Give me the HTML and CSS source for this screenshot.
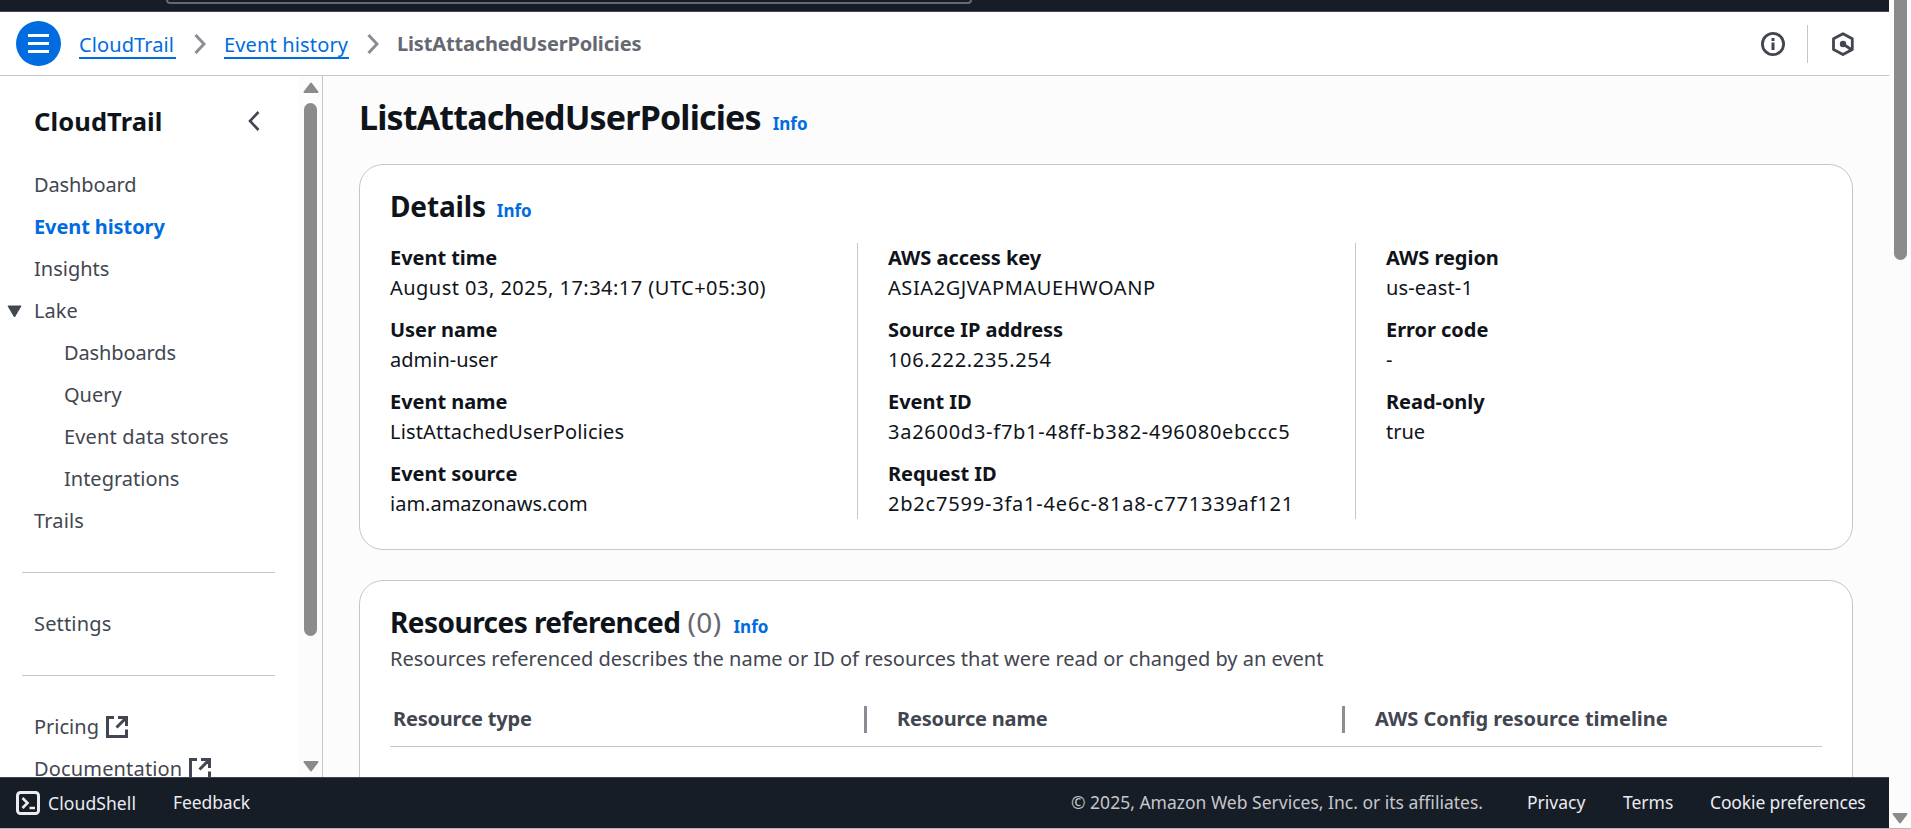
FILE: index.html
```html
<!DOCTYPE html>
<html lang="en">
<head>
<meta charset="utf-8">
<title>CloudTrail - ListAttachedUserPolicies</title>
<link rel="stylesheet" href="styles.css">
</head>
<body>
<svg width="0" height="0" class="defs">
  <symbol id="external" viewBox="0 0 22 22"><path d="M8 1.500H1.500v19H20.500V13.500M12 1.500h8.500v8.500M20 2 10.500 11.500" fill="none" stroke="currentColor" stroke-width="3"/></symbol>
  <symbol id="next" viewBox="0 0 12 20"><path d="M1.500 1 10 10 1.500 19" fill="none" stroke="currentColor" stroke-width="3"/></symbol>
</svg>
<div class="app">
  <div class="page">
    <div class="topbar"><div class="search"></div></div>
    <header class="header">
      <button class="menu" aria-label="Menu"><span></span><span></span><span></span></button>
      <nav class="crumbs">
        <a class="crumb-service">CloudTrail</a>
        <svg class="sep"><use href="#next"/></svg>
        <a class="crumb-history">Event history</a>
        <svg class="sep"><use href="#next"/></svg>
        <b>ListAttachedUserPolicies</b>
      </nav>
      <div class="tools">
        <svg width="24" height="24" viewBox="0 0 24 24" fill="none"><circle cx="12" cy="12" r="10.600" stroke="#424650" stroke-width="2.800"/><path d="M12 6v3M12 10.500v7.500" stroke="#424650" stroke-width="3"/></svg>
        <span class="rule"></span>
        <svg width="24" height="24" viewBox="0 0 24 24" fill="none"><path d="M12 1.700 21.300 6.800V17.500L12 22.500 2.500 17.500V6.800Z" stroke="#424650" stroke-width="2.800" stroke-linejoin="round"/><circle cx="12" cy="12" r="3.200" fill="#424650"/><path d="M12 12 21 18" stroke="#424650" stroke-width="2.800"/></svg>
      </div>
    </header>
    <div class="body">
      <aside class="side">
        <div class="side-content">
          <div class="side-head"><h2>CloudTrail</h2><svg width="12" height="20" viewBox="0 0 12 20"><path d="M10.500 1 2 10l8.500 9" fill="none" stroke="#424650" stroke-width="2.600"/></svg></div>
          <a class="tight">Dashboard</a>
          <a class="active">Event history</a>
          <a>Insights</a>
          <a class="group"><svg width="15" height="13" viewBox="0 0 15 13"><path d="M1 1h13L7.500 12Z" fill="#424650" stroke="#424650" stroke-linejoin="round"/></svg>Lake</a>
          <a class="sub tight">Dashboards</a>
          <a class="sub">Query</a>
          <a class="sub wide">Event data stores</a>
          <a class="sub">Integrations</a>
          <a class="wide">Trails</a>
          <hr>
          <a class="wide">Settings</a>
          <hr>
          <a>Pricing <svg class="ext"><use href="#external"/></svg></a>
          <a class="wide">Documentation <svg class="ext"><use href="#external"/></svg></a>
        </div>
        <div class="track side-track">
          <svg width="16" height="11" viewBox="0 0 16 11"><path d="M8 1.500 14.500 10h-13Z" fill="#8b8b8b" stroke="#8b8b8b" stroke-width="2" stroke-linejoin="round"/></svg>
          <div class="thumb"></div>
          <svg class="down" width="16" height="11" viewBox="0 0 16 11"><path d="M1.500 1h13L8 9.500Z" fill="#8b8b8b" stroke="#8b8b8b" stroke-width="2" stroke-linejoin="round"/></svg>
        </div>
      </aside>
      <main class="main">
        <div class="title"><h1>ListAttachedUserPolicies</h1><a class="info">Info</a></div>
        <section class="card details">
          <div class="title"><h2>Details</h2><a class="info">Info</a></div>
          <div class="columns">
            <dl>
              <dt>Event time</dt><dd class="date">August 03, 2025, 17:34:17 (UTC+05:30)</dd>
              <dt>User name</dt><dd>admin-user</dd>
              <dt>Event name</dt><dd class="wide">ListAttachedUserPolicies</dd>
              <dt>Event source</dt><dd>iam.amazonaws.com</dd>
            </dl>
            <dl>
              <dt>AWS access key</dt><dd class="key">ASIA2GJVAPMAUEHWOANP</dd>
              <dt>Source IP address</dt><dd class="ip">106.222.235.254</dd>
              <dt>Event ID</dt><dd class="uuid">3a2600d3-f7b1-48ff-b382-496080ebccc5</dd>
              <dt>Request ID</dt><dd class="uuid request">2b2c7599-3fa1-4e6c-81a8-c771339af121</dd>
            </dl>
            <dl>
              <dt>AWS region</dt><dd class="wide">us-east-1</dd>
              <dt>Error code</dt><dd>-</dd>
              <dt>Read-only</dt><dd>true</dd>
            </dl>
          </div>
        </section>
        <section class="card resources">
          <div class="title"><h2>Resources referenced</h2><span class="count">(0)</span><a class="info">Info</a></div>
          <p>Resources referenced describes the name or ID of resources that were read or changed by an event</p>
          <div class="thead"><div>Resource type</div><div>Resource name</div><div class="timeline">AWS Config resource timeline</div></div>
        </section>
      </main>
    </div>
    <footer class="footer">
      <svg width="24" height="24" viewBox="0 0 24 24" fill="none" stroke="#ebebf0"><rect x="1.500" y="1.500" width="21" height="21" rx="3" stroke-width="3"/><path d="M6.500 7 11.500 12 6.500 17M13.500 17H19" stroke-width="2.600"/></svg>
      <a class="shell">CloudShell</a>
      <a class="feedback">Feedback</a>
      <span class="copy">© 2025, Amazon Web Services, Inc. or its affiliates.</span>
      <a class="privacy">Privacy</a>
      <a class="terms">Terms</a>
      <a class="cookies">Cookie preferences</a>
    </footer>
  </div>
  <div class="track page-track">
    <div class="thumb"></div>
    <svg class="down" width="16" height="11" viewBox="0 0 16 11"><path d="M1.500 1h13L8 9.500Z" fill="#8b8b8b" stroke="#8b8b8b" stroke-width="2" stroke-linejoin="round"/></svg>
  </div>
</div>
</body>
</html>
```

FILE: styles.css
```css
* { box-sizing: border-box; margin: 0; padding: 0; }
body { font-family: "Noto Sans", "Open Sans", sans-serif; font-size: 20px; line-height: 30px; color: #0f141a; background: #fcfcfd; overflow: hidden; }
a, h1, h2, p, b, dt, dd, span { white-space: nowrap; }
.defs { position: absolute; }
.app { display: flex; height: 829px; border-bottom: 1px solid #b8b8b8; }
.page { width: 1889px; display: flex; flex-direction: column; }
.wide { letter-spacing: .16px; }
.tight { letter-spacing: -.12px; }

.topbar { height: 12px; flex: none; background: #161d26; border-bottom: 1px solid #424650; padding-left: 166px; }
.search { width: 806px; height: 4px; border: 2px solid #656871; border-top: 0; border-radius: 0 0 8px 8px; }

.header { height: 64px; flex: none; display: flex; align-items: center; background: #fff; border-bottom: 1px solid #c6c6cd; padding: 0 34px 0 16px; }
.menu { width: 45px; height: 45px; border: 0; border-radius: 50%; background: #006ce0; display: flex; flex-direction: column; align-items: center; justify-content: center; gap: 5px; }
.menu span { width: 21px; height: 3px; background: #fff; }
.crumbs { display: flex; align-items: center; margin-left: 18px; color: #656871; }
.crumbs a { color: #006ce0; border-bottom: 2px solid #006ce0; height: 28px; line-height: 27px; margin-top: 2px; }
.crumbs b { letter-spacing: -.16px; }
.crumb-service { width: 97px; letter-spacing: .1px; }
.crumb-history { width: 125px; letter-spacing: .15px; }
.sep { width: 12px; height: 20px; margin: 0 18px; color: #8c8c94; }
.tools { display: flex; align-items: center; margin-left: auto; }
.rule { width: 1px; height: 38px; background: #c6c6cd; margin: 0 23px 0 22px; }

.body { flex: 1; min-height: 0; display: flex; overflow: hidden; }
.side { width: 323px; flex: none; display: flex; background: #fff; border-right: 1px solid #c6c6cd; }
.side-content { width: 299px; color: #424650; overflow: hidden; }
.side-head { height: 88px; display: flex; align-items: center; justify-content: space-between; padding: 1px 39px 0 34px; color: #0f141a; }
.side-head h2 { font-size: 25.500px; letter-spacing: .1px; }
.side-content a { display: flex; align-items: center; height: 42px; padding-left: 34px; }
.side-content .active { color: #006ce0; font-weight: 700; letter-spacing: -.1px; }
.side-content .group { padding-left: 7px; gap: 12px; }
.side-content .sub { padding-left: 64px; }
.side-content hr { border: 0; border-top: 1px solid #c6c6cd; margin: 30px 24px 30px 22px; }
.ext { width: 22px; height: 22px; margin-left: 7px; }

.track { background: #fcfcfc; display: flex; flex-direction: column; align-items: center; }
.thumb { width: 13px; border-radius: 7px; background: #8b8b8b; }
.down { margin-top: auto; }
.side-track { width: 23px; padding: 6px 0 5px; }
.side-track .thumb { height: 533px; margin-top: 10px; }
.page-track { width: 22px; padding-bottom: 4px; }
.page-track .thumb { height: 260px; border-radius: 0 0 7px 7px; }

.main { flex: 1; padding: 19px 36px 0; overflow: hidden; }
.title { display: flex; align-items: baseline; }
.info { font-size: 17px; font-weight: 700; color: #006ce0; }
.main > .title { height: 69px; line-height: 45px; }
h1 { font-size: 34px; margin-right: 12px; letter-spacing: -.84px; }
.card { border: 1px solid #c6c6cd; border-radius: 24px; background: #fff; padding: 23px 30px 0; }
.card h2, .count { font-size: 28px; line-height: 36px; letter-spacing: -.5px; }
.card h2 { margin-right: 11px; }
.details { height: 386px; }
.details h2 { letter-spacing: -.15px; }
.details .title { height: 55px; }
.columns { display: grid; grid-template-columns: 467px 498px 1fr; height: 276px; }
dl + dl { border-left: 1px solid #c6c6cd; padding-left: 30px; }
dt { font-weight: 700; letter-spacing: -.04px; }
dd { margin-bottom: 12px; }
dd:last-child { margin-bottom: 0; }
.date { letter-spacing: .47px; }
.key { letter-spacing: .58px; }
.ip { letter-spacing: .68px; }
.uuid { letter-spacing: .74px; }
.request { letter-spacing: .8px; }
.resources { height: 300px; margin-top: 30px; }
.resources h2 { margin-right: 7px; letter-spacing: -.54px; }
.count { color: #656871; margin-right: 12px; }
.resources .count { letter-spacing: .4px; }
.resources p { color: #424650; margin-top: 2px; }
.thead { display: grid; grid-template-columns: 477px 478px 1fr; align-items: center; height: 54px; margin-top: 19px; border-bottom: 1px solid #c6c6cd; color: #424650; font-weight: 700; letter-spacing: -.2px; }
.thead div { height: 27px; line-height: 25px; padding-left: 3px; }
.thead div + div { border-left: 3px solid #8c8c94; padding-left: 30px; margin-left: -3px; }
.thead .timeline { letter-spacing: -.03px; }

.footer { height: 51px; flex: none; display: flex; align-items: center; background: #161d26; border-top: 1px solid #424650; padding-left: 16px; font-size: 17.500px; color: #ebebf0; }
.footer a:not(.shell), .copy { margin-top: -2px; }
.shell { width: 125px; margin-left: 8px; letter-spacing: .1px; }
.feedback { letter-spacing: -.1px; }
.copy { width: 456px; margin-left: auto; color: #c6c6cd; }
.privacy { width: 96px; }
.terms { width: 87px; }
.cookies { width: 179px; letter-spacing: -.14px; }
```
